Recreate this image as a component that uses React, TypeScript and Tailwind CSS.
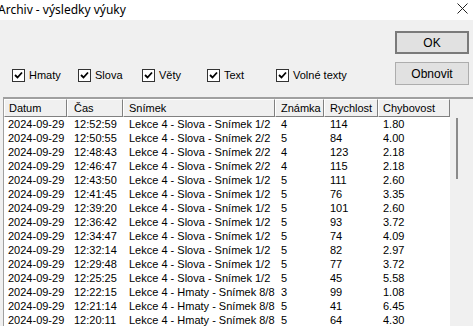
import React from "react";

const rows = [
  ["12:52:59", "Slova", "1/2", "4", "114", "1.80"],
  ["12:50:55", "Slova", "2/2", "5", "84", "4.00"],
  ["12:48:43", "Slova", "2/2", "4", "123", "2.18"],
  ["12:46:47", "Slova", "2/2", "4", "115", "2.18"],
  ["12:43:50", "Slova", "1/2", "5", "111", "2.60"],
  ["12:41:45", "Slova", "1/2", "5", "76", "3.35"],
  ["12:39:20", "Slova", "1/2", "5", "101", "2.60"],
  ["12:36:42", "Slova", "1/2", "5", "93", "3.72"],
  ["12:34:47", "Slova", "1/2", "5", "74", "4.09"],
  ["12:32:14", "Slova", "1/2", "5", "82", "2.97"],
  ["12:29:48", "Slova", "1/2", "5", "77", "3.72"],
  ["12:25:25", "Slova", "1/2", "5", "45", "5.58"],
  ["12:22:15", "Hmaty", "8/8", "3", "99", "1.08"],
  ["12:21:14", "Hmaty", "8/8", "5", "41", "6.45"],
  ["12:20:11", "Hmaty", "8/8", "5", "64", "4.30"],
];

const filters = [
  { label: "Hmaty", w: "w-[66px]" },
  { label: "Slova", w: "w-[64px]" },
  { label: "Věty", w: "w-[65px]" },
  { label: "Text", w: "w-[69px]" },
  { label: "Volné texty", w: "w-[90px]" },
];

const cols = [
  { name: "Datum", w: "w-[63px] pl-[4px]" },
  { name: "Čas", w: "w-[56px] pl-[6px]" },
  { name: "Snímek", w: "w-[152px] pl-[5px]" },
  { name: "Známka", w: "w-[49px] pl-[5px]" },
  { name: "Rychlost", w: "w-[54px] pl-[5px]" },
  { name: "Chybovost", w: "w-[72px] pl-[4px]" },
];

function Check({ label, w }: { label: string; w: string }) {
  return (
    <label className={`flex items-center gap-[4px] ${w}`}>
      <span className="w-[13px] h-[13px] bg-white border border-[#333] flex items-center justify-center shrink-0">
        <svg width="9" height="9" viewBox="0 0 9 9">
          <path d="M1 4 L3.5 6.5 L8 1.5" stroke="#000" strokeWidth="1.8" fill="none" />
        </svg>
      </span>
      <span className="whitespace-nowrap">{label}</span>
    </label>
  );
}

export default function App() {
  return (
    <div
      className="w-[473px] h-[326px] overflow-hidden bg-[#f0f0f0] text-[11px] text-black"
      style={{ fontFamily: "'Liberation Sans', Arial, sans-serif" }}
    >
      {/* title bar */}
      <div className="h-[20px] bg-white flex items-center justify-between">
        <span className="-ml-[2px] text-[12px] leading-none" style={{ fontFamily: "'Noto Sans', sans-serif" }}>
          Archiv - výsledky výuky
        </span>
        <svg width="11" height="11" viewBox="0 0 11 11" className="mr-[5px] -mt-[3px]">
          <path d="M0.5 0.5 L10.5 10.5 M10.5 0.5 L0.5 10.5" stroke="#222" strokeWidth="1" />
        </svg>
      </div>

      <div className="flex h-[77px]">
        <div className="flex-1 flex items-start pl-[12px] pt-[47px]">
          {filters.map((f) => (
            <Check key={f.label} label={f.label} w={f.w} />
          ))}
        </div>
        <div className="flex flex-col gap-[8px] pt-[11px] pr-[4px] text-[12px]">
          <button className="w-[74px] h-[23px] bg-[#e1e1e1] border-2 border-[#7a7a7a]">OK</button>
          <button className="w-[74px] h-[23px] bg-[#e1e1e1] border border-[#adadad]">Obnovit</button>
        </div>
      </div>

      {/* list */}
      <div className="ml-[3px] border-t-2 border-l border-[#a0a0a0] bg-white h-[300px] flex">
        <div>
          <div className="flex h-[18px]">
            {cols.map((c) => (
              <div
                key={c.name}
                className={`${c.w} bg-[#f0f0f0] border-t border-l border-white border-r border-b border-r-[#808080] border-b-[#808080] leading-[16px] whitespace-nowrap overflow-hidden`}
              >
                {c.name}
              </div>
            ))}
          </div>
          {rows.map((r) => (
            <div key={r[0]} className="flex h-[14px] leading-[14px] whitespace-nowrap">
              <div className="w-[63px] pl-[4px]">2024-09-29</div>
              <div className="w-[56px] pl-[7px]">{r[0]}</div>
              <div className="w-[152px] pl-[6px]">
                Lekce 4 - {r[1]} - Snímek {r[2]}
              </div>
              <div className="w-[49px] pl-[6px]">{r[3]}</div>
              <div className="w-[54px] pl-[6px]">{r[4]}</div>
              <div className="w-[72px] pl-[5px]">{r[5]}</div>
            </div>
          ))}
        </div>
        <div className="flex-1 bg-[#f0f0f0] relative">
          <div className="absolute left-[6px] top-[19px] w-[2px] h-[61px] bg-[#8b8b8b]" />
        </div>
      </div>
    </div>
  );
}
